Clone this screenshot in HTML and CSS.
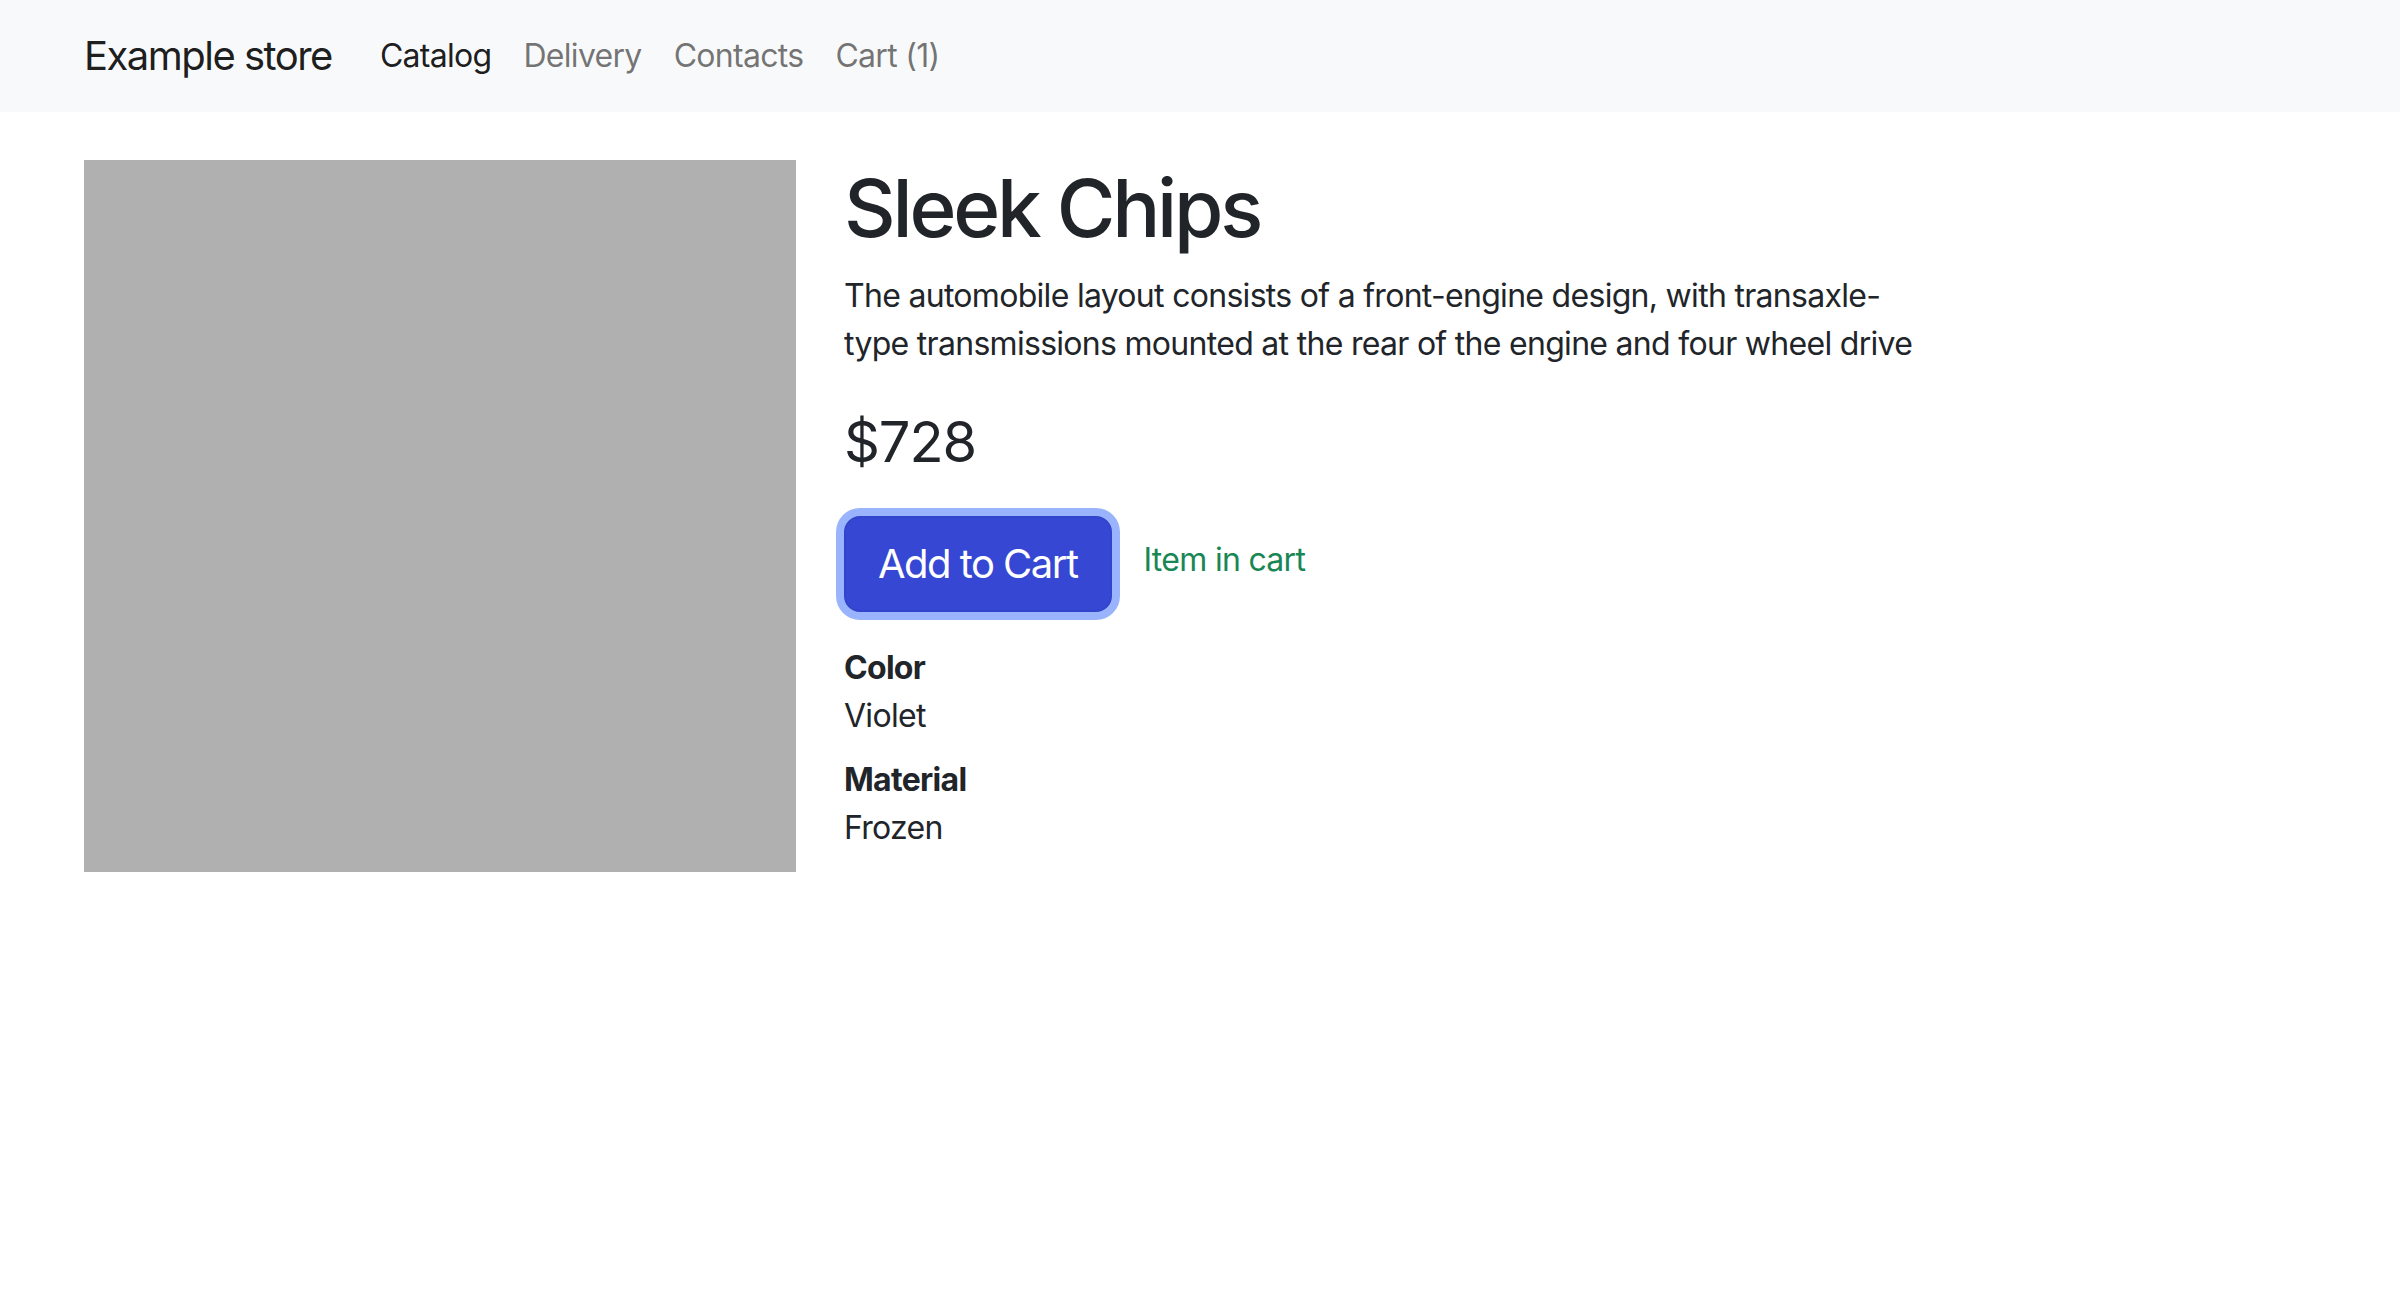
FILE: index.html
```html
<!DOCTYPE html>
<html lang="en">
<head>
<meta charset="utf-8">
<title>Sleek Chips - Example store</title>
<link rel="stylesheet" href="styles.css">
</head>
<body>
<nav class="navbar">
  <div class="container nav-inner">
    <a class="brand" href="#">Example store</a>
    <ul class="nav-links">
      <li><a class="nav-link active" href="#">Catalog</a></li>
      <li><a class="nav-link" href="#">Delivery</a></li>
      <li><a class="nav-link" href="#">Contacts</a></li>
      <li><a class="nav-link" href="#">Cart (1)</a></li>
    </ul>
  </div>
</nav>
<main class="container main">
  <div class="row">
    <div class="col-image">
      <div class="product-image"></div>
    </div>
    <div class="col-info">
      <h1 class="title">Sleek Chips</h1>
      <p class="description">The automobile layout consists of a front-engine design, with transaxle-type transmissions mounted at the rear of the engine and four wheel drive</p>
      <p class="price">$728</p>
      <div class="actions">
        <button class="btn-cart" type="button">Add to Cart</button>
        <span class="in-cart">Item in cart</span>
      </div>
      <dl class="props">
        <dt>Color</dt>
        <dd>Violet</dd>
        <dt>Material</dt>
        <dd>Frozen</dd>
      </dl>
    </div>
  </div>
</main>
</body>
</html>
```

FILE: styles.css
```css
* { box-sizing: border-box; }
html, body { margin: 0; padding: 0; }
body {
  font-family: Inter, "Noto Sans", "Liberation Sans", sans-serif;
  font-size: 32px;
  line-height: 1.5;
  letter-spacing: -0.022em;
  color: #212529;
  background: #fff;
}
.container {
  width: 2280px;
  margin: 0 auto;
  padding: 0 24px;
}
.navbar {
  background: #f8f9fa;
  padding: 16px 0;
}
.nav-inner {
  display: flex;
  align-items: center;
}
.brand {
  font-size: 40px;
  line-height: 60px;
  letter-spacing: -0.038em;
  padding: 10px 0;
  margin-right: 32px;
  color: rgba(0,0,0,.9);
  text-decoration: none;
}
.nav-links {
  display: flex;
  list-style: none;
  margin: 0;
  padding: 0;
}
.nav-link {
  display: block;
  padding: 16px 16px;
  color: rgba(0,0,0,.55);
  text-decoration: none;
}
.nav-link.active { color: rgba(0,0,0,.9); }
.main { padding-top: 48px; }
.row {
  display: flex;
  margin: 0 -24px;
}
.col-image {
  flex: 0 0 760px;
  padding: 0 24px;
}
.product-image {
  width: 712px;
  height: 712px;
  background: #b0b0b0;
}
.col-info {
  flex: 1 1 auto;
  padding: 0 24px;
}
.title {
  font-size: 80px;
  line-height: 1.2;
  font-weight: 500;
  letter-spacing: -0.04em;
  margin: 0 0 16px;
}
.description {
  margin: 0 0 32px;
  max-width: 1090px;
}
.price {
  font-size: 56px;
  letter-spacing: -0.02em;
  margin: 0 0 32px;
}
.actions {
  display: flex;
  align-items: center;
  margin-bottom: 32px;
}
.btn-cart {
  font-family: inherit;
  font-size: 40px;
  line-height: 1.5;
  letter-spacing: -0.038em;
  padding: 16px 32px;
  color: #fff;
  background: #3547d3;
  border: 2px solid #3344cc;
  border-radius: 16px;
  box-shadow: 0 0 0 8px #99b4fd;
  cursor: pointer;
}
.in-cart {
  color: #198754;
  margin-left: 32px;
  margin-bottom: 8px;
}
.props { margin: 0; }
.props dt { font-weight: 700; }
.props dd { margin: 0 0 16px; }
```
